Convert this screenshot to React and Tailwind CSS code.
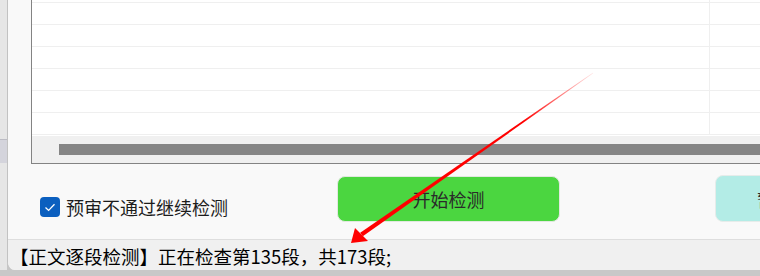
import React from "react";

const font = { fontFamily: '"Noto Sans CJK SC", "Microsoft YaHei", sans-serif' };

function Row({ h = "h-[22px]" }) {
  return (
    <div className={`flex ${h} border-b border-[#efefef] shrink-0`}>
      <div className="w-[678px] h-full border-r border-[#efefef] shrink-0" />
      <div className="flex-1" />
    </div>
  );
}

export default function App() {
  return (
    <div className="w-[760px] h-[276px] bg-[#c6c6c6] relative overflow-hidden flex flex-col" style={font}>
      <div className="flex h-[270px] shrink-0">
        <div className="w-[7px] flex flex-col bg-[#e6e6e6] shrink-0">
          <div className="h-[139px]" />
          <div className="h-[24px] bg-[#d4d4dc] border-t border-[#bcbcc4]" />
          <div className="flex-1" />
        </div>
        <div className="flex-1 flex flex-col bg-[#f9f9f9] border-l border-[#c2c2c2] rounded-bl-[8px] overflow-hidden">
          <div className="pl-[23px] shrink-0">
            <div className="h-[164px] bg-white border-l border-b border-[#838383] flex flex-col">
              <Row h="h-[3px]" />
              <Row />
              <Row />
              <Row />
              <Row />
              <Row />
              <Row />
              <div className="h-[1px] shrink-0" />
              <div className="h-[27px] bg-[#f0f0f0] shrink-0 pt-[8px] pl-[27px]">
                <div className="h-[11px] bg-[#858585]" />
              </div>
            </div>
          </div>
          <div className="h-[75px] flex items-start shrink-0">
            <div className="ml-[32px] mt-[33px] w-[297px] h-[20px] flex items-center shrink-0">
              <div className="w-[20px] h-[20px] rounded-[4px] bg-[#0b5fbf] flex items-center justify-center shrink-0">
                <svg width="20" height="20" viewBox="0 0 20 20">
                  <polyline points="5.5,10.5 8.6,13.4 14.5,7.2" fill="none" stroke="white" strokeWidth="1.3" />
                </svg>
              </div>
              <span className="ml-[6px] text-[18px] leading-none text-[#1c1c1c] whitespace-nowrap">预审不通过继续检测</span>
            </div>
            <div className="mt-[12px] w-[223px] h-[46px] rounded-[8px] bg-[#4bd640] border border-[#e2e8e0] flex items-center justify-center shrink-0">
              <span className="text-[18px] leading-none text-[#2a2a2a] whitespace-nowrap">开始检测</span>
            </div>
            <div className="ml-[155px] mt-[11px] w-[223px] h-[47px] rounded-[8px] bg-[#b3ece6] border border-[#e6ecea] flex items-center pl-[41px] shrink-0">
              <span className="text-[18px] leading-none text-[#2a2a2a] whitespace-nowrap">暂停检测</span>
            </div>
          </div>
          <div className="h-[31px] border-t border-[#dedede] bg-[#f0f0f0] flex items-center pl-[2px] pt-[3px] shrink-0">
            <span className="text-[18.5px] leading-none text-black whitespace-nowrap">【正文逐段检测】正在检查第135段，共173段;</span>
          </div>
        </div>
      </div>
      <div className="flex-1 bg-[#c8c8c8]" />
      <svg className="absolute left-0 top-0 pointer-events-none" width="760" height="276" viewBox="0 0 760 276">
        <defs>
          <linearGradient id="ag" gradientUnits="userSpaceOnUse" x1="593" y1="73" x2="362" y2="235">
            <stop offset="0" stopColor="#ff0000" stopOpacity="0.1" />
            <stop offset="0.3" stopColor="#ff0000" stopOpacity="1" />
            <stop offset="1" stopColor="#ff0000" stopOpacity="1" />
          </linearGradient>
        </defs>
        <polygon points="593.2,73.3 592.8,72.7 360.2,232.7 362.8,236.3" fill="url(#ag)" />
        <polygon points="355,228 351,243 368,241" fill="#ff0000" />
      </svg>
    </div>
  );
}
